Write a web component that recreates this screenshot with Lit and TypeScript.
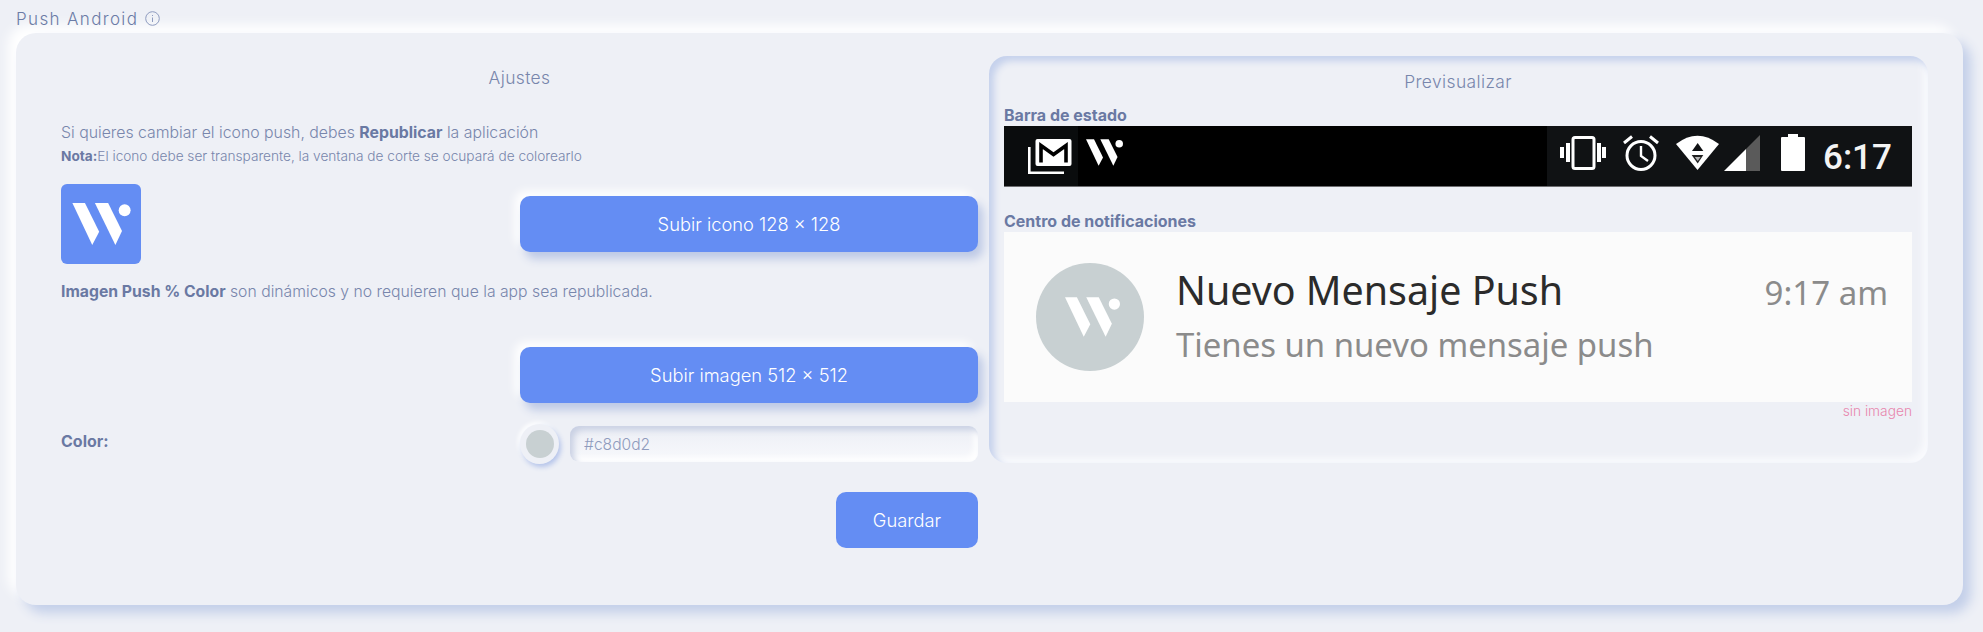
import { LitElement, html, css } from "lit";
import { customElement } from "lit/decorators.js";

const W = (cls: string) => html`<svg class=${cls} viewBox="0 0 176 127" aria-hidden="true">
  <polygon fill="#fff" points="0,0 38,0 81,87 60,127" />
  <polygon fill="#fff" points="68,0 108,0 150,85 130,127" />
  <circle fill="#fff" cx="158" cy="22" r="18" />
</svg>`;

@customElement("app-root")
export class AppRoot extends LitElement {
  static styles = css`
    :host {
      display: block;
      min-height: 632px;
      background: #eef0f6;
      font-family: Inter, "Noto Sans", sans-serif;
      color: #7886ac;
      overflow: hidden;
    }
    .page { padding: 0 20px 0 16px; }
    .head {
      height: 33px;
      display: flex;
      align-items: center;
      gap: 7px;
      padding-top: 4px;
      box-sizing: border-box;
      font-size: 17px;
      font-weight: 300;
      letter-spacing: 1.35px;
      color: #6b7ba6;
    }
    .info { width: 15px; height: 15px; }
    .card {
      background: #eef0f6;
      border-radius: 20px;
      box-shadow: 8px 8px 12px #c3cfe9, -8px -8px 12px #ffffff;
      display: grid;
      grid-template-columns: 917px 939px;
      column-gap: 11px;
      padding: 23px 0 57px 45px;
      align-items: start;
    }
    .left { padding-top: 10px; display: flex; flex-direction: column; }
    .col-title {
      text-align: center;
      font-size: 17.4px;
      line-height: 24px;
      font-weight: 300;
      letter-spacing: 0.4px;
    }
    b { font-weight: 700; color: #6a79a3; }
    .t1 { margin-top: 33px; font-size: 15.84px; line-height: 20px; font-weight: 300; }
    .t2 { margin-top: 5px; font-size: 13.65px; line-height: 16px; font-weight: 300; }
    .logo-row { margin-top: 20px; display: flex; justify-content: space-between; align-items: center; }
    .logo {
      width: 80px;
      height: 80px;
      background: #648df3;
      border-radius: 6px;
      display: flex;
      align-items: center;
      justify-content: center;
    }
    .logo-w { width: 59px; height: 42px; }
    .btn {
      border: 0;
      background: #648df3;
      color: #fff;
      font-family: inherit;
      font-size: 18.3px;
      font-weight: 300;
      border-radius: 10px;
      height: 55.5px;
      width: 458px;
      padding: 0;
    }
    .raised { box-shadow: 5px 7px 10px #bcc8e5, -5px -5px 10px #ffffff; }
    .t3 { margin-top: 18px; font-size: 15.75px; line-height: 20px; font-weight: 300; }
    .right-align { display: flex; justify-content: flex-end; }
    .btn2-row { margin-top: 45px; }
    .color-row {
      margin-top: 21px;
      height: 41px;
      display: grid;
      grid-template-columns: 459px 39px 1fr;
      column-gap: 0;
      align-items: center;
    }
    .color-row label { font-size: 16px; font-weight: 700; color: #6a79a3; margin-top: -6px; }
    .swatch {
      width: 39px;
      height: 40px;
      border-radius: 50%;
      background: #eef0f6;
      box-shadow: 2px 3px 5px #b5c4ea, -2px -2px 4px #ffffff;
      display: flex;
      align-items: center;
      justify-content: center;
      margin-top: -1px;
    }
    .swatch i { display: block; width: 28px; height: 28px; border-radius: 50%; background: #c8d0d2; }
    .hex {
      margin-left: 11px;
      height: 36px;
      box-sizing: border-box;
      width: 408px;
      border: 0;
      border-radius: 9px;
      padding: 0 14px;
      font: 300 15.6px Inter, sans-serif;
      color: #8f9bbd;
      background: linear-gradient(180deg, #eceef5, #f8f9fc);
      box-shadow: inset 4px 4px 6px #c9d0e3, inset -4px -4px 6px #ffffff;
      outline: none;
    }
    .save-row { margin-top: 27px; }
    .save { width: 142px; height: 56px; }
    .panel {
      box-sizing: border-box;
      border-radius: 18px;
      padding: 14px 16px 45px 15px;
      box-shadow: inset 5px 5px 7px #c5d1ec, inset -5px -5px 7px #f9fafd;
    }
    .sub {
      font-size: 16px;
      line-height: 16px;
      font-weight: 700;
      color: #6a79a3;
    }
    .bar-label { margin-top: 13px; margin-bottom: 3px; }
    .bar {
      height: 61px;
      box-sizing: border-box;
      border-bottom: 1px solid #6d6d70;
      background: #000;
      display: flex;
      justify-content: space-between;
      align-items: stretch;
    }
    .bar-l {
      display: flex;
      align-items: center;
      gap: 14px;
      padding-left: 24px;
      background: linear-gradient(90deg, #0a0c0d 74px, #000 74px);
      flex: 1;
    }
    .bar-r {
      width: 365px;
      box-sizing: border-box;
      background: #101214;
      display: flex;
      align-items: center;
      padding-left: 13px;
    }
    .i-gmail { width: 44px; height: 35px; }
    .i-w { width: 37px; height: 27px; margin-bottom: 7px; }
    .i-vib { width: 46px; height: 34px; margin-right: 17px; margin-bottom: 7px; }
    .i-alarm { width: 36px; height: 36px; margin-right: 17px; margin-bottom: 6px; }
    .i-wifi { width: 43px; height: 36px; margin-right: 5px; margin-bottom: 6px; }
    .i-sig { width: 36px; height: 36px; margin-right: 21px; margin-bottom: 6px; }
    .i-bat { width: 24px; height: 37px; margin-right: 18px; margin-bottom: 7px; }
    .clock { font: 500 35px/1 Roboto, sans-serif; color: #f4f4f4; margin-top: 2px; }
    .notif-label { margin-top: 26px; margin-bottom: 3px; }
    .notif {
      height: 170px;
      background: #fbfbfb;
      display: flex;
      align-items: center;
      padding-left: 32px;
      box-sizing: border-box;
    }
    .avatar {
      width: 108px;
      height: 108px;
      border-radius: 50%;
      background: #c8d0d2;
      display: flex;
      align-items: center;
      justify-content: center;
      flex: none;
      margin-right: 33px;
      padding-left: 4px;
      box-sizing: border-box;
    }
    .av-w { width: 55px; height: 40px; }
    .n-text { flex: 1; font-family: "Noto Sans", sans-serif; margin-top: -4px; margin-left: -1px; }
    .n-top { display: flex; justify-content: space-between; align-items: baseline; padding-right: 24px; }
    .n-title { font-size: 39.4px; line-height: 54px; color: #2b2b2b; }
    .n-time { font-size: 33px; color: #8b8b8b; }
    .n-body { font-size: 32.9px; line-height: 44px; color: #8b8b8b; margin-top: 6px; }
    .noimg { margin-top: 2px; text-align: right; font-size: 13.75px; line-height: 14px; font-weight: 300; color: #e886ad; }
  `;

  render() {
    return html`<div class="page">
      <div class="head">
        <span>Push Android</span>
        <svg class="info" viewBox="0 0 15 15" fill="none" stroke="#8e9bbf" stroke-width="1">
          <circle cx="7.5" cy="7.5" r="6.8" />
          <path d="M7.5 6.5V11M7.5 4V5" />
        </svg>
      </div>
      <div class="card">
        <div class="left">
          <div class="col-title">Ajustes</div>
          <div class="t1">Si quieres cambiar el icono push, debes <b>Republicar</b> la aplicación</div>
          <div class="t2"><b>Nota:</b>El icono debe ser transparente, la ventana de corte se ocupará de colorearlo</div>
          <div class="logo-row">
            <div class="logo">${W("logo-w")}</div>
            <button class="btn raised">Subir icono 128 × 128</button>
          </div>
          <div class="t3"><b>Imagen Push % Color</b> son dinámicos y no requieren que la app sea republicada.</div>
          <div class="right-align btn2-row"><button class="btn raised">Subir imagen 512 × 512</button></div>
          <div class="color-row">
            <label>Color:</label>
            <div class="swatch"><i></i></div>
            <input class="hex" .value=${"#c8d0d2"} />
          </div>
          <div class="right-align save-row"><button class="btn save">Guardar</button></div>
        </div>
        <div class="panel">
          <div class="col-title">Previsualizar</div>
          <div class="sub bar-label">Barra de estado</div>
          <div class="bar">
            <div class="bar-l">
              <svg class="i-gmail" viewBox="0 0 44 35" aria-hidden="true">
                <path d="M1.3 8V33.7H36" fill="none" stroke="#fff" stroke-width="2.6" />
                <rect x="7.5" y="0" width="36" height="27" rx="2" fill="#fff" />
                <path d="M13 23.5V6.5L25.5 15.5L38 6.5V23.5" fill="none" stroke="#000" stroke-width="3.6" />
              </svg>
              ${W("i-w")}
            </div>
            <div class="bar-r">
              <svg class="i-vib" viewBox="0 0 46 34" fill="#fff" aria-hidden="true">
                <rect x="13" y="1.5" width="21" height="31" rx="2" fill="none" stroke="#fff" stroke-width="3" />
                <rect x="6" y="7" width="4" height="19" />
                <rect x="0" y="11" width="4" height="11" />
                <rect x="37" y="7" width="4" height="19" />
                <rect x="42" y="11" width="4" height="11" />
              </svg>
              <svg class="i-alarm" viewBox="0 0 36 36" fill="none" stroke="#fff" stroke-width="3" aria-hidden="true">
                <circle cx="18" cy="20.5" r="14" />
                <path d="M1 8L9 1.5M35 8L27 1.5" />
                <path d="M18 11V21L25 26" stroke-width="2.4" />
              </svg>
              <svg class="i-wifi" viewBox="0 0 43 36" aria-hidden="true">
                <path d="M0 9Q21.5 -7.6 43 9L21.5 35Z" fill="#fff" />
                <polygon points="21.7,8 16,16 27.3,16" fill="#101214" />
                <polygon points="15.7,20 27.3,20 21.7,28.5" fill="#222" />
                <polygon points="18.8,22 24.6,22 21.7,26" fill="#b5b5b5" />
              </svg>
              <svg class="i-sig" viewBox="0 0 36 36" aria-hidden="true">
                <polygon points="0,36 22,14 22,36" fill="#fff" />
                <polygon points="22,14 36,0 36,36 22,36" fill="#5a5a5a" />
              </svg>
              <svg class="i-bat" viewBox="0 0 24 37" fill="#fff" aria-hidden="true">
                <rect x="7" y="0" width="10" height="5" />
                <rect x="0" y="3" width="24" height="34" rx="1" />
              </svg>
              <span class="clock">6:17</span>
            </div>
          </div>
          <div class="sub notif-label">Centro de notificaciones</div>
          <div class="notif">
            <div class="avatar">${W("av-w")}</div>
            <div class="n-text">
              <div class="n-top">
                <span class="n-title">Nuevo Mensaje Push</span>
                <span class="n-time">9:17 am</span>
              </div>
              <div class="n-body">Tienes un nuevo mensaje push</div>
            </div>
          </div>
          <div class="noimg">sin imagen</div>
        </div>
      </div>
    </div>`;
  }
}
